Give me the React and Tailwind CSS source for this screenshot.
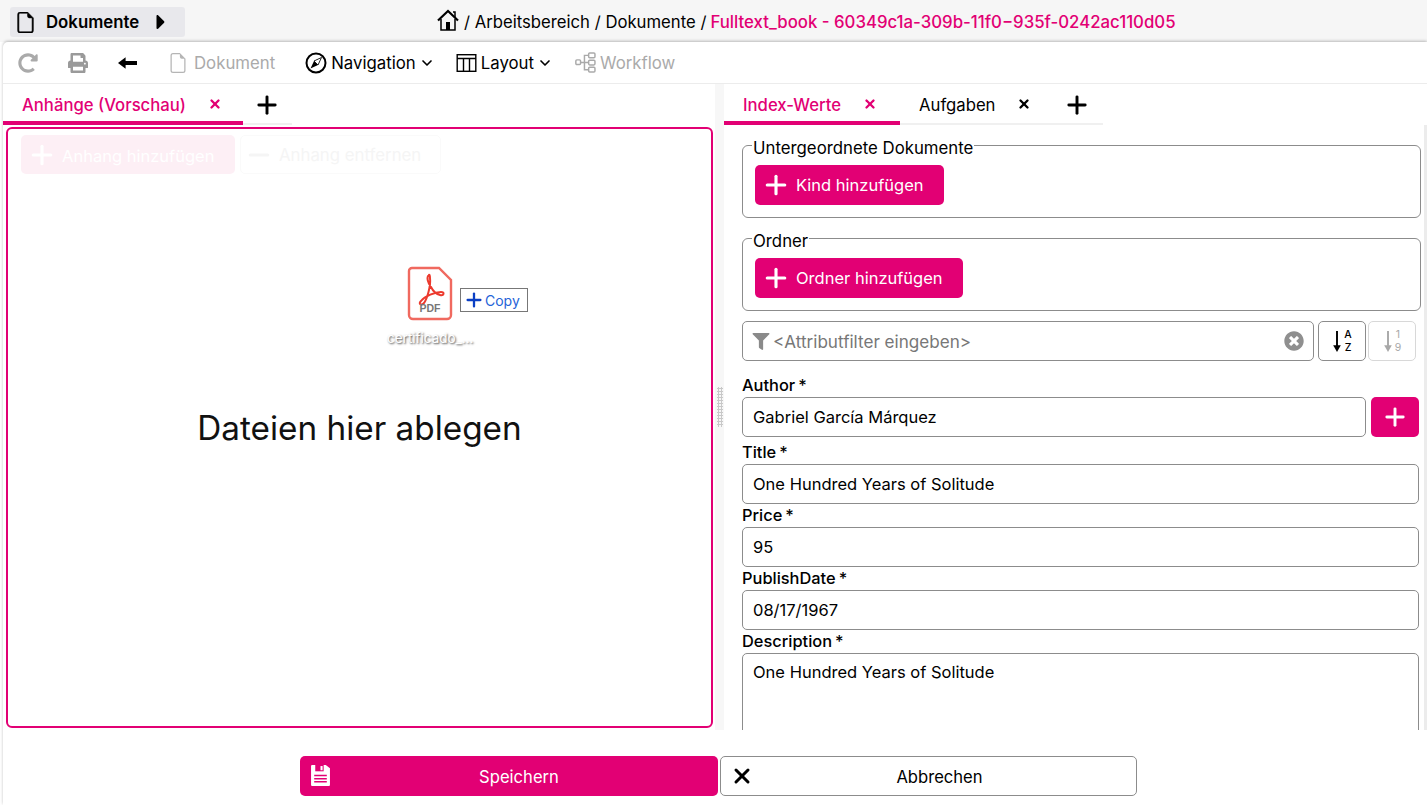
import React from "react";
import { FaPrint, FaFilter, FaTimesCircle, FaCaretRight, FaRedoAlt } from "react-icons/fa";
import { BsFileEarmark } from "react-icons/bs";
import { LuChevronDown, LuPlus, LuMinus, LuX } from "react-icons/lu";

function PlusIcon({ className }) {
  return <LuPlus className={className} strokeWidth={2.5} />;
}

function PinkButton({ children, className = "" }) {
  return (
    <button className={`flex items-center h-10 rounded-[5px] bg-[#e20074] text-white text-[16.5px] ${className}`}>
      <PlusIcon className="w-[30px] h-[30px] ml-[6px] mr-[5px]" />
      {children}
    </button>
  );
}

function Label({ text }) {
  return (
    <div className="h-5 mb-[2px] text-[16.4px] leading-5 font-medium text-black">
      {text}
      <span className="ml-[3px]">*</span>
    </div>
  );
}

function Field({ label, value, className = "" }) {
  return (
    <div className={className}>
      <Label text={label} />
      <input
        readOnly
        value={value}
        className="w-full h-10 px-[10px] border border-[#8c8c8c] rounded-[5px] text-[16.5px] text-black outline-none"
      />
    </div>
  );
}

function Tab({ label, active, width }) {
  return (
    <div
      className={`flex items-center h-[41px] ${active ? "pt-[6px] border-b-4 border-[#e20074] text-[#e20074]" : "pt-[4px] border-b-2 border-[#f0f0f0] text-black"} ${width}`}
    >
      <span className={`text-[16.7px] ${active ? "font-medium" : "font-normal"}`}>{label}</span>
      <LuX className="w-[14px] h-[14px] ml-[22px] mb-[3px]" strokeWidth={4} />
    </div>
  );
}

function TableIcon({ className }) {
  return (
    <svg viewBox="0 0 20 18" className={className} fill="none" stroke="currentColor" strokeWidth="1.4">
      <rect x="0.7" y="0.7" width="18.6" height="16.6" />
      <path d="M0.7 4.5 H19.3 M7 4.5 V17.3 M13 4.5 V17.3" />
    </svg>
  );
}

function WorkflowIcon({ className }) {
  return (
    <svg viewBox="0 0 20 20" className={className} fill="none" stroke="currentColor" strokeWidth="1.4">
      <rect x="0.8" y="7.5" width="4.5" height="4.5" rx="1" />
      <rect x="13" y="1" width="6" height="4.5" rx="1" />
      <rect x="13" y="7.8" width="6" height="4.5" rx="1" />
      <rect x="13" y="14.5" width="6" height="4.5" rx="1" />
      <path d="M5.3 10 H13 M9 10 V3.2 H13 M9 10 V16.8 H13" />
    </svg>
  );
}

function CompassIcon({ className }) {
  return (
    <svg viewBox="0 0 22 22" className={className}>
      <circle cx="11" cy="11" r="9.5" fill="none" stroke="currentColor" strokeWidth="2" />
      <path d="M16.5 5.5 L13 13 L5.5 16.5 L9 9 Z" fill="currentColor" />
      <path d="M16.5 5.5 L13 13 L9 9 Z" fill="#fff" stroke="currentColor" strokeWidth="0.8" />
    </svg>
  );
}

function ArrowLeftIcon({ className }) {
  return (
    <svg viewBox="0 0 20 16" className={className}>
      <path d="M0 8 L8 2 V6 H20 V10 H8 V14 Z" fill="currentColor" />
    </svg>
  );
}

function HomeIcon({ className }) {
  return (
    <svg viewBox="0 0 22 22" className={className} fill="none" stroke="currentColor">
      <path d="M1 11.5 L11 2 L21 11.5" strokeWidth="2.2" />
      <path d="M16 3 H18 V8" strokeWidth="1.5" />
      <path d="M4 10 V21 H18 V10" strokeWidth="1.5" />
      <rect x="9" y="13" width="4" height="8" fill="currentColor" stroke="none" />
    </svg>
  );
}

function SaveIcon({ className }) {
  return (
    <svg viewBox="0 0 18 20" className={className}>
      <path d="M1 0 H14 L18 3 V19 a1 1 0 0 1 -1 1 H1 a1 1 0 0 1 -1 -1 V1 a1 1 0 0 1 1 -1 Z" fill="#fff" />
      <rect x="4" y="0" width="8" height="6" fill="#e20074" />
      <rect x="9" y="1" width="2" height="4" fill="#fff" />
      <path d="M3 10 H15 M3 13 H15 M3 16 H15" stroke="#e20074" strokeWidth="1.4" />
    </svg>
  );
}

function SortArrow({ color }) {
  return (
    <svg viewBox="0 0 10 24" className="w-[10px] h-[23px] mr-[2px]">
      <path d="M5 1 V20" stroke={color} strokeWidth="2" />
      <path d="M1 16 L5 23 L9 16 Z" fill={color} />
    </svg>
  );
}

function PdfGhost() {
  return (
    <div className="absolute left-[387px] top-[266px] w-[142px] h-[84px]">
      <svg viewBox="0 0 46 56" className="absolute left-[20px] top-0 w-[46px] h-[56px]">
        <path d="M5 2 H32 L44 14 V49 a4 4 0 0 1 -4 4 H6 a4 4 0 0 1 -4 -4 V5 a3 3 0 0 1 3 -3 Z" fill="#fff" stroke="#f0695f" strokeWidth="2.4" />
        <path d="M22 9 C19 11 21 17 24 21 C26 25 28 28 33 29 C37 30 38 26 34 26 C28 26 18 30 14 35 C11 38 14 40 17 37 C20 33 24 20 23 12 C23 9 22 8 22 9 Z" fill="none" stroke="#ec3a2e" strokeWidth="2" />
        <text x="23" y="46" textAnchor="middle" fontSize="10.5" fontWeight="700" fill="#777" fontFamily="Liberation Sans, sans-serif">PDF</text>
      </svg>
      <div className="absolute left-[73px] top-[22px] w-[68px] h-6 flex items-center bg-white border border-[#777] text-[#2563d8] text-[14px]">
        <LuPlus className="w-[22px] h-[22px] ml-[2px] text-[#0b3fc4]" strokeWidth={2.5} />
        Copy
      </div>
      <div className="absolute left-0 top-[62px] text-[13.5px] leading-5 text-white [text-shadow:1px_1px_2px_#444]">certificado_...</div>
    </div>
  );
}

export default function App() {
  return (
    <div className="w-[1427px] h-[805px] overflow-hidden bg-white flex flex-col font-['Inter','Noto_Sans',sans-serif] text-black">
      {/* header */}
      <div className="h-[42px] bg-[#f6f6f6] flex items-center shrink-0">
        <div className="flex items-center ml-[10px] mt-[2px] w-[175px] h-[30px] rounded-[3px] bg-[#e8e8ec]">
          <BsFileEarmark className="w-[21px] h-[21px] ml-[5px] text-black" strokeWidth={0.4} />
          <span className="ml-[10px] mt-[2px] text-[16.8px] font-semibold">Dokumente</span>
          <FaCaretRight className="w-[24px] h-[24px] ml-[10px]" />
        </div>
        <div className="flex items-center ml-[252px] mt-[4px] text-[16.7px] whitespace-nowrap">
          <HomeIcon className="w-[22px] h-[22px] mb-[7px] mr-[5px]" />
          <span>/ Arbeitsbereich / Dokumente / </span>
          <span className="ml-[4px] text-[#e20074] font-medium text-[16.8px]">Fulltext_book - 60349c1a-309b-11f0−935f-0242ac110d05</span>
        </div>
      </div>

      <div className="flex-1 ml-[3px] flex flex-col rounded-tl-[5px] shadow-[0_-1px_3px_rgba(0,0,0,0.25)] min-h-0">
        {/* toolbar */}
        <div className="h-[42px] shrink-0 flex items-center border-b border-[#ececec] text-[16.8px]">
          <FaRedoAlt className="w-[20px] h-[20px] ml-[15px] text-[#aaaaaa]" />
          <FaPrint className="w-[20px] h-[20px] ml-[30px] text-[#9a9a9a]" />
          <ArrowLeftIcon className="w-[19px] h-[16px] ml-[30px]" />
          <BsFileEarmark className="w-[20px] h-[22px] ml-[31px] text-[#b5b5b5]" />
          <span className="ml-[6px] mt-[2px] text-[#aaaaaa]">Dokument</span>
          <CompassIcon className="w-[22px] h-[22px] ml-[30px]" />
          <span className="ml-[4px] mt-[2px]">Navigation</span>
          <LuChevronDown className="w-[16px] h-[16px] ml-[3px]" strokeWidth={2.5} />
          <TableIcon className="w-[21px] h-[18px] ml-[21px]" />
          <span className="ml-[4px] mt-[2px]">Layout</span>
          <LuChevronDown className="w-[16px] h-[16px] ml-[3px]" strokeWidth={2.5} />
          <WorkflowIcon className="w-[21px] h-[21px] ml-[22px] text-[#aaaaaa]" />
          <span className="ml-[4px] mt-[2px] text-[#aaaaaa]">Workflow</span>
        </div>

        <div className="flex h-[646px] shrink-0">
          {/* left pane */}
          <div className="w-[712px] shrink-0 flex flex-col">
            <div className="flex items-end h-[41px]">
              <Tab label="Anhänge (Vorschau)" active width="w-[240px] pl-[19px]" />
              <div className="flex items-center w-[49px] h-[41px] pt-[2px] border-b-2 border-[#f0f0f0]">
                <LuPlus className="w-[28px] h-[28px] ml-[10px]" strokeWidth={2.5} />
              </div>
            </div>
            <div className="relative mt-[2px] ml-[3px] w-[707px] h-[601px] border-2 border-[#e20074] rounded-[6px]">
              <div className="flex gap-[5px] mt-[6px] ml-[13px] opacity-90">
                <button className="flex items-center w-[214px] h-[39px] pt-[3px] rounded-[5px] bg-[#fdeef5] text-white text-[16.5px]">
                  <LuPlus className="w-[30px] h-[30px] ml-[6px] mr-[5px] mb-[3px]" strokeWidth={2.5} />
                  Anhang hinzufügen
                </button>
                <button className="flex items-center w-[201px] h-[39px] pt-[3px] rounded-[5px] border border-[#fafafa] text-[#f5f5f5] text-[16.8px]">
                  <LuMinus className="w-[30px] h-[30px] ml-[3px] mr-[5px] mb-[3px]" strokeWidth={2.5} />
                  Anhang entfernen
                </button>
              </div>
              <div className="mt-[232px] text-center text-[33.3px] leading-[44px] text-[#111]">Dateien hier ablegen</div>
            </div>
            <PdfGhost />
          </div>

          {/* gutter */}
          <div className="w-[9px] shrink-0 bg-[#f7f7f7] flex items-center justify-center">
            <div className="w-[6px] h-[40px] bg-[radial-gradient(#c8c8c8_1.2px,transparent_1.3px)] bg-[length:3px_3px]" />
          </div>

          {/* right pane */}
          <div className="flex-1 flex flex-col min-w-0 overflow-hidden">
            <div className="flex items-end h-[41px] shrink-0">
              <Tab label="Index-Werte" active width="w-[176px] pl-[19px]" />
              <Tab label="Aufgaben" width="w-[134px] pl-[19px]" />
              <div className="flex items-center w-[69px] h-[41px] pt-[2px] border-b-2 border-[#f0f0f0]">
                <LuPlus className="w-[28px] h-[28px] ml-[29px]" strokeWidth={2.5} />
              </div>
            </div>
            <div className="flex-1 relative pl-[18px] pr-[6px] overflow-hidden">
              <div className="absolute right-0 top-0 bottom-0 w-[3px] bg-[#ececec]" />
              <fieldset className="h-[86px] mt-[7px] border border-[#8c8c8c] rounded-[6px] pl-[12px]">
                <legend className="h-[26px] pt-[6px] px-[1px] ml-[-3px] text-[16.8px] leading-5">Untergeordnete Dokumente</legend>
                <PinkButton className="w-[189px] mt-[7px]">Kind hinzufügen</PinkButton>
              </fieldset>
              <fieldset className="h-[86px] mt-[7px] border border-[#8c8c8c] rounded-[6px] pl-[12px]">
                <legend className="h-[26px] pt-[6px] px-[1px] ml-[-3px] text-[16.8px] leading-5">Ordner</legend>
                <PinkButton className="w-[208px] mt-[7px]">Ordner hinzufügen</PinkButton>
              </fieldset>

              <div className="flex mt-[10px] h-10 pr-[5px]">
                <div className="flex items-center w-[572px] h-10 border border-[#8c8c8c] rounded-[5px] pl-[9px] pr-[9px] text-[#777] text-[17.1px]">
                  <FaFilter className="w-[18px] h-[17px] mr-[3px] text-[#8a8a8a]" />
                  <span className="flex-1 pt-[1px]">&lt;Attributfilter eingeben&gt;</span>
                  <FaTimesCircle className="w-[20px] h-[20px] text-[#8f8f8f]" />
                </div>
                <button className="flex items-center justify-center w-[48px] h-10 ml-[4px] border border-[#8c8c8c] rounded-[5px]">
                  <SortArrow color="#000" />
                  <span className="flex flex-col text-[10.5px] leading-[13px] font-medium"><span>A</span><span>Z</span></span>
                </button>
                <button className="flex items-center justify-center w-[48px] h-10 ml-[2px] border border-[#d8d8d8] rounded-[5px] text-[#a8a8a8]">
                  <SortArrow color="#a8a8a8" />
                  <span className="flex flex-col text-[10.5px] leading-[13px]"><span>1</span><span>9</span></span>
                </button>
              </div>

              <div className="mt-[14px] flex flex-col">
                <Label text="Author" />
                <div className="flex">
                  <input readOnly value="Gabriel García Márquez" className="w-[624px] h-10 px-[10px] border border-[#8c8c8c] rounded-[5px] text-[16.5px] outline-none" />
                  <button className="flex items-center justify-center w-[48px] h-10 ml-[5px] rounded-[5px] bg-[#e20074] text-white">
                    <PlusIcon className="w-[28px] h-[28px]" />
                  </button>
                </div>
              </div>
              <div className="pr-[2px]">
                <Field label="Title" value="One Hundred Years of Solitude" className="mt-[5px]" />
                <Field label="Price" value="95" className="mt-[1px]" />
                <Field label="PublishDate" value="08/17/1967" className="mt-[1px]" />
                <div className="mt-[1px]">
                  <Label text="Description" />
                  <textarea
                    readOnly
                    value="One Hundred Years of Solitude"
                    className="block w-full h-[110px] px-[10px] py-[6px] border border-[#8c8c8c] rounded-[5px] text-[16.5px] leading-6 outline-none resize-none"
                  />
                </div>
              </div>
            </div>
          </div>
        </div>

        {/* footer */}
        <div className="flex mt-[26px] ml-[297px]">
          <button className="relative flex items-center justify-center w-[418px] h-10 pl-[20px] pt-[2px] rounded-[5px] bg-[#e20074] text-white text-[16.6px]">
            <SaveIcon className="absolute left-[10px] top-[9px] w-[21px] h-[21px]" />
            Speichern
          </button>
          <button className="relative flex items-center justify-center w-[417px] h-10 pl-[20px] pt-[2px] ml-[2px] rounded-[5px] border border-[#8c8c8c] bg-white text-[16.6px]">
            <LuX className="absolute left-[9px] top-[7px] w-[24px] h-[24px]" strokeWidth={3} />
            <span className="ml-[2px]">Abbrechen</span>
          </button>
        </div>
      </div>
    </div>
  );
}
